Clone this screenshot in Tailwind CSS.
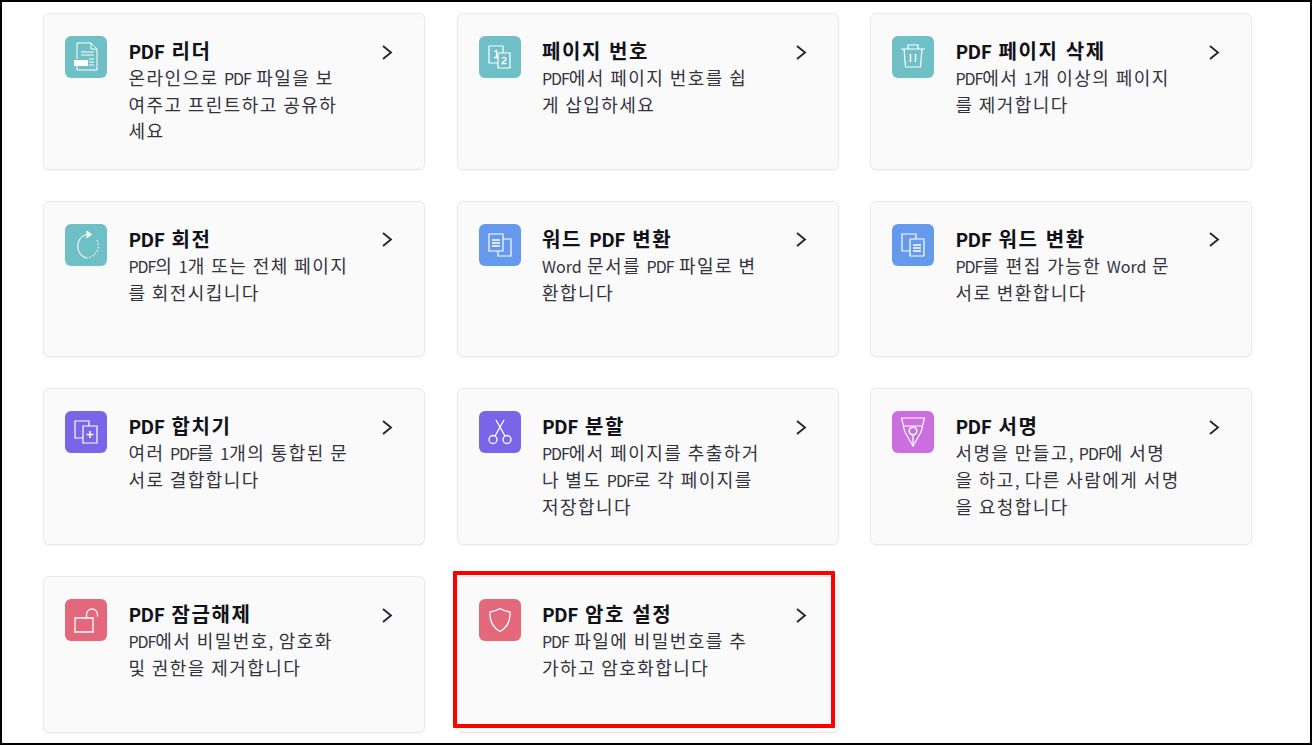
<!DOCTYPE html>
<html lang="ko">
<head>
  <meta charset="UTF-8" />
  <title>PDF 도구</title>
  <script src="https://cdn.jsdelivr.net/npm/@tailwindcss/browser@4"></script>
</head>
<body class="bg-white font-['Noto_Sans_CJK_KR','Noto_Sans',sans-serif] text-[#33333b]">
  <div class="relative h-[745px] w-[1312px] overflow-hidden border-2 border-black pl-[41px] pt-[11px]">
    <div class="grid grid-cols-[382px_382px_382px] gap-x-[31.5px] gap-y-[31.1px]">

      <!-- PDF 리더 -->
      <a class="flex h-[156.6px] rounded-md border border-[#e9e9ec] bg-[#fafafb] pl-[21px] pt-[22px] shadow-[0_1px_2px_rgba(0,0,0,0.04)]">
        <span class="flex size-[42px] shrink-0 items-center justify-center rounded-md bg-[#6fbfc6]">
          <svg class="size-[42px]" viewBox="0 0 42 42" fill="none" stroke="#fff" stroke-width="1"><path d="M12 23V7h14l6 6v21H12v-4" /><path d="M26 7v6h6M16 16h13M16 19h13M24 23h5M24 26h5M24 29h5" /><rect x="9" y="24" width="14" height="6" fill="#fff" stroke="none" /></svg>
        </span>
        <div class="ml-[21.4px] w-[219px] whitespace-nowrap">
          <h3 class="mt-[1px] text-[20px] leading-[28px] font-bold tracking-[1.6px] text-[#111118]"><span class="text-[19px] tracking-[-0.5px]">PDF</span> 리더</h3>
          <p class="-mt-[1px] text-[18px] leading-[26px] tracking-[1.44px] [word-spacing:-1px]">온라인으로 <span class="text-[16px] tracking-[-1px]">PDF</span> 파일을 보<br>여주고 프린트하고 공유하<br>세요</p>
        </div>
        <svg class="mt-[8.5px] ml-[33.1px] size-[15px]" viewBox="0 0 15 15" fill="none" stroke="#22222a" stroke-width="1.8"><path d="M3 1l8 6.500L3 14" /></svg>
      </a>

      <!-- 페이지 번호 -->
      <a class="flex h-[156.6px] rounded-md border border-[#e9e9ec] bg-[#fafafb] pl-[21px] pt-[22px] shadow-[0_1px_2px_rgba(0,0,0,0.04)]">
        <span class="flex size-[42px] shrink-0 items-center justify-center rounded-md bg-[#6fbfc6]">
          <svg class="size-[42px]" viewBox="0 0 42 42" fill="none" stroke="#fff" stroke-width="1.2"><path d="M19 27h-9V10h14v7" /><path d="M19 17h12v15H19z" /><path d="M15.500 15.500l2-1v7M15 21.500h4.500M23 22.500c.5-1.500 4-1.500 4 .5 0 1.500-3.500 2.500-4 4.500h4.500" stroke-width="1.300" /></svg>
        </span>
        <div class="ml-[21.4px] w-[219px] whitespace-nowrap">
          <h3 class="mt-[1px] text-[20px] leading-[28px] font-bold tracking-[1.6px] text-[#111118]">페이지 번호</h3>
          <p class="-mt-[1px] text-[18px] leading-[26px] tracking-[1.44px] [word-spacing:-1px]"><span class="text-[16px] tracking-[-1px]">PDF</span>에서 페이지 번호를 쉽<br>게 삽입하세요</p>
        </div>
        <svg class="mt-[8.5px] ml-[33.1px] size-[15px]" viewBox="0 0 15 15" fill="none" stroke="#22222a" stroke-width="1.8"><path d="M3 1l8 6.500L3 14" /></svg>
      </a>

      <!-- PDF 페이지 삭제 -->
      <a class="flex h-[156.6px] rounded-md border border-[#e9e9ec] bg-[#fafafb] pl-[21px] pt-[22px] shadow-[0_1px_2px_rgba(0,0,0,0.04)]">
        <span class="flex size-[42px] shrink-0 items-center justify-center rounded-md bg-[#6fbfc6]">
          <svg class="size-[42px]" viewBox="0 0 42 42" fill="none" stroke="#fff" stroke-width="1.2"><path d="M9 13h24M16 13V9h10v4M12 13l1.500 18h15L30 13" /><path d="M18.500 18v8M23.500 18v8" stroke-width="1.500" /></svg>
        </span>
        <div class="ml-[21.4px] w-[219px] whitespace-nowrap">
          <h3 class="mt-[1px] text-[20px] leading-[28px] font-bold tracking-[1.6px] text-[#111118]"><span class="text-[19px] tracking-[-0.5px]">PDF</span> 페이지 삭제</h3>
          <p class="-mt-[1px] text-[18px] leading-[26px] tracking-[1.44px] [word-spacing:-1px]"><span class="text-[16px] tracking-[-1px]">PDF</span>에서 <span class="text-[16px] tracking-normal">1</span>개 이상의 페이지<br>를 제거합니다</p>
        </div>
        <svg class="mt-[8.5px] ml-[33.1px] size-[15px]" viewBox="0 0 15 15" fill="none" stroke="#22222a" stroke-width="1.8"><path d="M3 1l8 6.500L3 14" /></svg>
      </a>

      <!-- PDF 회전 -->
      <a class="flex h-[156.6px] rounded-md border border-[#e9e9ec] bg-[#fafafb] pl-[21px] pt-[22px] shadow-[0_1px_2px_rgba(0,0,0,0.04)]">
        <span class="flex size-[42px] shrink-0 items-center justify-center rounded-md bg-[#6fbfc6]">
          <svg class="size-[42px]" viewBox="0 0 42 42" fill="none" stroke="#fff" stroke-width="1.2"><path d="M21 10.500A12.500 12.500 0 0 0 21 34" /><path d="M21 34A12.500 12.500 0 0 0 31.500 15" stroke-dasharray="1.500 1.800" /><path d="M22 7.500l4 3-4 3z" fill="#fff" /></svg>
        </span>
        <div class="ml-[21.4px] w-[219px] whitespace-nowrap">
          <h3 class="mt-[1px] text-[20px] leading-[28px] font-bold tracking-[1.6px] text-[#111118]"><span class="text-[19px] tracking-[-0.5px]">PDF</span> 회전</h3>
          <p class="-mt-[1px] text-[18px] leading-[26px] tracking-[1.44px] [word-spacing:-1px]"><span class="text-[16px] tracking-[-1px]">PDF</span>의 <span class="text-[16px] tracking-normal">1</span>개 또는 전체 페이지<br>를 회전시킵니다</p>
        </div>
        <svg class="mt-[8.5px] ml-[33.1px] size-[15px]" viewBox="0 0 15 15" fill="none" stroke="#22222a" stroke-width="1.8"><path d="M3 1l8 6.500L3 14" /></svg>
      </a>

      <!-- 워드 PDF 변환 -->
      <a class="flex h-[156.6px] rounded-md border border-[#e9e9ec] bg-[#fafafb] pl-[21px] pt-[22px] shadow-[0_1px_2px_rgba(0,0,0,0.04)]">
        <span class="flex size-[42px] shrink-0 items-center justify-center rounded-md bg-[#6499ee]">
          <svg class="size-[42px]" viewBox="0 0 42 42" fill="none" stroke="#fff" stroke-width="1.2"><path d="M10 10h14v17H10z" /><path d="M24 15h8v17H19v-5" /><path d="M13 16h8M13 19h8M13 22h8" stroke-width="1.500" /></svg>
        </span>
        <div class="ml-[21.4px] w-[219px] whitespace-nowrap">
          <h3 class="mt-[1px] text-[20px] leading-[28px] font-bold tracking-[1.6px] text-[#111118]">워드 <span class="text-[19px] tracking-[-0.5px]">PDF</span> 변환</h3>
          <p class="-mt-[1px] text-[18px] leading-[26px] tracking-[1.44px] [word-spacing:-1px]"><span class="text-[16px] tracking-normal">Word</span> 문서를 <span class="text-[16px] tracking-[-1px]">PDF</span> 파일로 변<br>환합니다</p>
        </div>
        <svg class="mt-[8.5px] ml-[33.1px] size-[15px]" viewBox="0 0 15 15" fill="none" stroke="#22222a" stroke-width="1.8"><path d="M3 1l8 6.500L3 14" /></svg>
      </a>

      <!-- PDF 워드 변환 -->
      <a class="flex h-[156.6px] rounded-md border border-[#e9e9ec] bg-[#fafafb] pl-[21px] pt-[22px] shadow-[0_1px_2px_rgba(0,0,0,0.04)]">
        <span class="flex size-[42px] shrink-0 items-center justify-center rounded-md bg-[#6499ee]">
          <svg class="size-[42px]" viewBox="0 0 42 42" fill="none" stroke="#fff" stroke-width="1.2"><path d="M18 27h-8V10h14v5" /><path d="M18 15h14v17H18z" /><path d="M21 21h8M21 24h8M21 27h8" stroke-width="1.500" /></svg>
        </span>
        <div class="ml-[21.4px] w-[219px] whitespace-nowrap">
          <h3 class="mt-[1px] text-[20px] leading-[28px] font-bold tracking-[1.6px] text-[#111118]"><span class="text-[19px] tracking-[-0.5px]">PDF</span> 워드 변환</h3>
          <p class="-mt-[1px] text-[18px] leading-[26px] tracking-[1.44px] [word-spacing:-1px]"><span class="text-[16px] tracking-[-1px]">PDF</span>를 편집 가능한 <span class="text-[16px] tracking-normal">Word</span> 문<br>서로 변환합니다</p>
        </div>
        <svg class="mt-[8.5px] ml-[33.1px] size-[15px]" viewBox="0 0 15 15" fill="none" stroke="#22222a" stroke-width="1.8"><path d="M3 1l8 6.500L3 14" /></svg>
      </a>

      <!-- PDF 합치기 -->
      <a class="flex h-[156.6px] rounded-md border border-[#e9e9ec] bg-[#fafafb] pl-[21px] pt-[22px] shadow-[0_1px_2px_rgba(0,0,0,0.04)]">
        <span class="flex size-[42px] shrink-0 items-center justify-center rounded-md bg-[#7a64e8]">
          <svg class="size-[42px]" viewBox="0 0 42 42" fill="none" stroke="#fff" stroke-width="1.2"><path d="M18 27h-8V10h14v5" /><path d="M18 15h14v17H18z" /><path d="M25 20v7M21.500 23.500h7" stroke-width="1.500" /></svg>
        </span>
        <div class="ml-[21.4px] w-[219px] whitespace-nowrap">
          <h3 class="mt-[1px] text-[20px] leading-[28px] font-bold tracking-[1.6px] text-[#111118]"><span class="text-[19px] tracking-[-0.5px]">PDF</span> 합치기</h3>
          <p class="-mt-[1px] text-[18px] leading-[26px] tracking-[1.44px] [word-spacing:-1px]">여러 <span class="text-[16px] tracking-[-1px]">PDF</span>를 <span class="text-[16px] tracking-normal">1</span>개의 통합된 문<br>서로 결합합니다</p>
        </div>
        <svg class="mt-[8.5px] ml-[33.1px] size-[15px]" viewBox="0 0 15 15" fill="none" stroke="#22222a" stroke-width="1.8"><path d="M3 1l8 6.500L3 14" /></svg>
      </a>

      <!-- PDF 분할 -->
      <a class="flex h-[156.6px] rounded-md border border-[#e9e9ec] bg-[#fafafb] pl-[21px] pt-[22px] shadow-[0_1px_2px_rgba(0,0,0,0.04)]">
        <span class="flex size-[42px] shrink-0 items-center justify-center rounded-md bg-[#7a64e8]">
          <svg class="size-[42px]" viewBox="0 0 42 42" fill="none" stroke="#fff" stroke-width="1.3"><circle cx="14" cy="28.500" r="4" /><circle cx="28" cy="28.500" r="4" /><path d="M16 25L25 9M26 25L17 9" /></svg>
        </span>
        <div class="ml-[21.4px] w-[219px] whitespace-nowrap">
          <h3 class="mt-[1px] text-[20px] leading-[28px] font-bold tracking-[1.6px] text-[#111118]"><span class="text-[19px] tracking-[-0.5px]">PDF</span> 분할</h3>
          <p class="-mt-[1px] text-[18px] leading-[26px] tracking-[1.44px] [word-spacing:-1px]"><span class="text-[16px] tracking-[-1px]">PDF</span>에서 페이지를 추출하거<br>나 별도 <span class="text-[16px] tracking-[-1px]">PDF</span>로 각 페이지를<br>저장합니다</p>
        </div>
        <svg class="mt-[8.5px] ml-[33.1px] size-[15px]" viewBox="0 0 15 15" fill="none" stroke="#22222a" stroke-width="1.8"><path d="M3 1l8 6.500L3 14" /></svg>
      </a>

      <!-- PDF 서명 -->
      <a class="flex h-[156.6px] rounded-md border border-[#e9e9ec] bg-[#fafafb] pl-[21px] pt-[22px] shadow-[0_1px_2px_rgba(0,0,0,0.04)]">
        <span class="flex size-[42px] shrink-0 items-center justify-center rounded-md bg-[#cb6fe0]">
          <svg class="size-[42px]" viewBox="0 0 42 42" fill="none" stroke="#fff" stroke-width="1.2"><path d="M9.500 7h23l-2 8h-19z" /><path d="M11.500 15c0 3 1 5 2 7l7.500 13 7.500-13c1-2 2-4 2-7" /><circle cx="21" cy="20" r="3.800" stroke-width="1.500" /><path d="M21 24v11" /></svg>
        </span>
        <div class="ml-[21.4px] w-[219px] whitespace-nowrap">
          <h3 class="mt-[1px] text-[20px] leading-[28px] font-bold tracking-[1.6px] text-[#111118]"><span class="text-[19px] tracking-[-0.5px]">PDF</span> 서명</h3>
          <p class="-mt-[1px] text-[18px] leading-[26px] tracking-[1.44px] [word-spacing:-1px]">서명을 만들고<span class="text-[16px] tracking-normal">,</span> <span class="text-[16px] tracking-[-1px]">PDF</span>에 서명<br>을 하고<span class="text-[16px] tracking-normal">,</span> 다른 사람에게 서명<br>을 요청합니다</p>
        </div>
        <svg class="mt-[8.5px] ml-[33.1px] size-[15px]" viewBox="0 0 15 15" fill="none" stroke="#22222a" stroke-width="1.8"><path d="M3 1l8 6.500L3 14" /></svg>
      </a>

      <!-- PDF 잠금해제 -->
      <a class="flex h-[156.6px] rounded-md border border-[#e9e9ec] bg-[#fafafb] pl-[21px] pt-[22px] shadow-[0_1px_2px_rgba(0,0,0,0.04)]">
        <span class="flex size-[42px] shrink-0 items-center justify-center rounded-md bg-[#e4687c]">
          <svg class="size-[42px]" viewBox="0 0 42 42" fill="none" stroke="#fff" stroke-width="1.3"><path d="M10 19h18v14H10z" /><path d="M21.500 19v-3.500a5.500 5.500 0 0 1 11 0v2" /></svg>
        </span>
        <div class="ml-[21.4px] w-[219px] whitespace-nowrap">
          <h3 class="mt-[1px] text-[20px] leading-[28px] font-bold tracking-[1.6px] text-[#111118]"><span class="text-[19px] tracking-[-0.5px]">PDF</span> 잠금해제</h3>
          <p class="-mt-[1px] text-[18px] leading-[26px] tracking-[1.44px] [word-spacing:-1px]"><span class="text-[16px] tracking-[-1px]">PDF</span>에서 비밀번호<span class="text-[16px] tracking-normal">,</span> 암호화<br>및 권한을 제거합니다</p>
        </div>
        <svg class="mt-[8.5px] ml-[33.1px] size-[15px]" viewBox="0 0 15 15" fill="none" stroke="#22222a" stroke-width="1.8"><path d="M3 1l8 6.500L3 14" /></svg>
      </a>

      <!-- PDF 암호 설정 -->
      <a class="flex h-[156.6px] rounded-md border border-[#e9e9ec] bg-[#fafafb] pl-[21px] pt-[22px] shadow-[0_1px_2px_rgba(0,0,0,0.04)]">
        <span class="flex size-[42px] shrink-0 items-center justify-center rounded-md bg-[#e4687c]">
          <svg class="size-[42px]" viewBox="0 0 42 42" fill="none" stroke="#fff" stroke-width="1.3"><path d="M21 9.500c3 2 6 3 10 3.500 .5 8-2 15-10 19.500C13 28 10.500 21 11 13c4-.5 7-1.500 10-3.500z" /></svg>
        </span>
        <div class="ml-[21.4px] w-[219px] whitespace-nowrap">
          <h3 class="mt-[1px] text-[20px] leading-[28px] font-bold tracking-[1.6px] text-[#111118]"><span class="text-[19px] tracking-[-0.5px]">PDF</span> 암호 설정</h3>
          <p class="-mt-[1px] text-[18px] leading-[26px] tracking-[1.44px] [word-spacing:-1px]"><span class="text-[16px] tracking-[-1px]">PDF</span> 파일에 비밀번호를 추<br>가하고 암호화합니다</p>
        </div>
        <svg class="mt-[8.5px] ml-[33.1px] size-[15px]" viewBox="0 0 15 15" fill="none" stroke="#22222a" stroke-width="1.8"><path d="M3 1l8 6.500L3 14" /></svg>
      </a>
    </div>

    <!-- 강조 표시 -->
    <div class="absolute top-[569px] left-[451px] h-[157px] w-[382px] rounded-[1px] border-4 border-[#ff0000]"></div>
  </div>
</body>
</html>
